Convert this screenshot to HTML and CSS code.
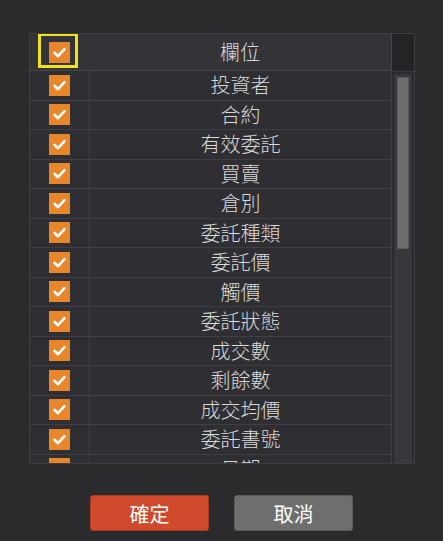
FILE: index.html
```html
<!DOCTYPE html>
<html lang="zh-Hant">
<head>
    <meta charset="UTF-8">
    <meta name="viewport" content="width=device-width, initial-scale=1.0">
    <title>欄位設定</title>
    <link rel="stylesheet" href="styles.css">
</head>
<body>

    <div class="dialog">
        <div class="panel">
            <div class="list">
                <div class="header">
                    <div class="check-cell">
                        <span class="focus-ring"></span>
                        <span class="box"><svg viewBox="0 0 21 21"><path d="M5.5 10.8 L9 14.2 L15.5 7.2"/></svg></span>
                    </div>
                    <div class="text-cell">欄位</div>
                </div>
                <div class="rows" id="rows"></div>
            </div>
            <div class="side">
                <div class="side-head"></div>
                <div class="track"><div class="thumb"></div></div>
            </div>
        </div>

        <div class="actions">
            <button class="btn ok">確定</button>
            <button class="btn cancel">取消</button>
        </div>
    </div>

    <script>
        const columns = ['投資者', '合約', '有效委託', '買賣', '倉別', '委託種類', '委託價', '觸價',
            '委託狀態', '成交數', '剩餘數', '成交均價', '委託書號', '日期'];
        const rows = document.getElementById('rows');
        const check = '<span class="box"><svg viewBox="0 0 21 21"><path d="M5.5 10.8 L9 14.2 L15.5 7.2"/></svg></span>';

        columns.forEach(name => {
            const row = document.createElement('div');
            row.classList.add('row');
            row.innerHTML = `<div class="check-cell">${check}</div><div class="text-cell">${name}</div>`;
            rows.appendChild(row);
        });
    </script>

</body>
</html>
```

FILE: styles.css
```css
body {
    margin: 0;
    background-color: #2b2b2d;
    font-family: "Noto Sans CJK TC", "Noto Sans", sans-serif;
    color: #dadada;
}
.dialog {
    padding: 33px 0 0 29px;
}
.panel {
    display: flex;
    width: 384px;
    height: 429px;
    border: 1px solid #3c3c42;
    overflow: hidden;
}
.list {
    flex: 1;
    display: flex;
    flex-direction: column;
    overflow: hidden;
}
.header {
    display: flex;
    flex: none;
    height: 36px;
    background-color: #333338;
    border-bottom: 1px solid #45454b;
    border-right: 1px solid #45454b;
}
.header .check-cell {
    position: relative;
    border-right: none;
}
.focus-ring {
    position: absolute;
    left: 8px;
    top: -1px;
    width: 34px;
    height: 29px;
    border: 3px solid #f2e21a;
}
.rows {
    flex: 1;
    overflow: hidden;
}
.row {
    display: flex;
    height: 28.5px;
    background-color: #2e2e33;
    border-bottom: 1px solid #3e3e44;
    border-right: 1px solid #3e3e44;
}
.check-cell {
    width: 59px;
    flex: none;
    display: flex;
    align-items: center;
    justify-content: center;
    border-right: 1px solid #3e3e44;
}
.text-cell {
    flex: 1;
    display: flex;
    align-items: center;
    justify-content: center;
    font-size: 20px;
    font-weight: 300;
    line-height: 1;
}
.box {
    width: 21px;
    height: 21px;
    background-color: #e8862b;
    display: block;
}
.box svg {
    width: 21px;
    height: 21px;
    display: block;
}
.box path {
    fill: none;
    stroke: #ffffff;
    stroke-width: 2.6;
    stroke-linecap: round;
    stroke-linejoin: round;
}
.side {
    width: 22px;
    flex: none;
    display: flex;
    flex-direction: column;
}
.side-head {
    height: 37px;
    background-color: #242426;
    border-bottom: 1px solid #38383c;
}
.track {
    flex: 1;
    margin: 1px 1px 0 1px;
    padding: 3px 3px;
    background-color: #37373c;
    border: 1px solid #2a2a2e;
    border-bottom: none;
}
.thumb {
    height: 170px;
    background-color: #6c6c6e;
    border: 1px solid #5a5a5d;
}
.actions {
    display: flex;
    gap: 25px;
    padding: 31px 0 0 61px;
}
.btn {
    width: 119px;
    height: 36px;
    border-radius: 3px;
    font-family: "Noto Sans CJK TC", "Noto Sans", sans-serif;
    font-size: 20px;
    color: #ffffff;
    padding: 0;
    cursor: pointer;
}
.ok {
    background-color: #cf4a2c;
    border: 1px solid #a83b22;
}
.cancel {
    background-color: #6e6e6e;
    border: 1px solid #5b5b5b;
}
```
